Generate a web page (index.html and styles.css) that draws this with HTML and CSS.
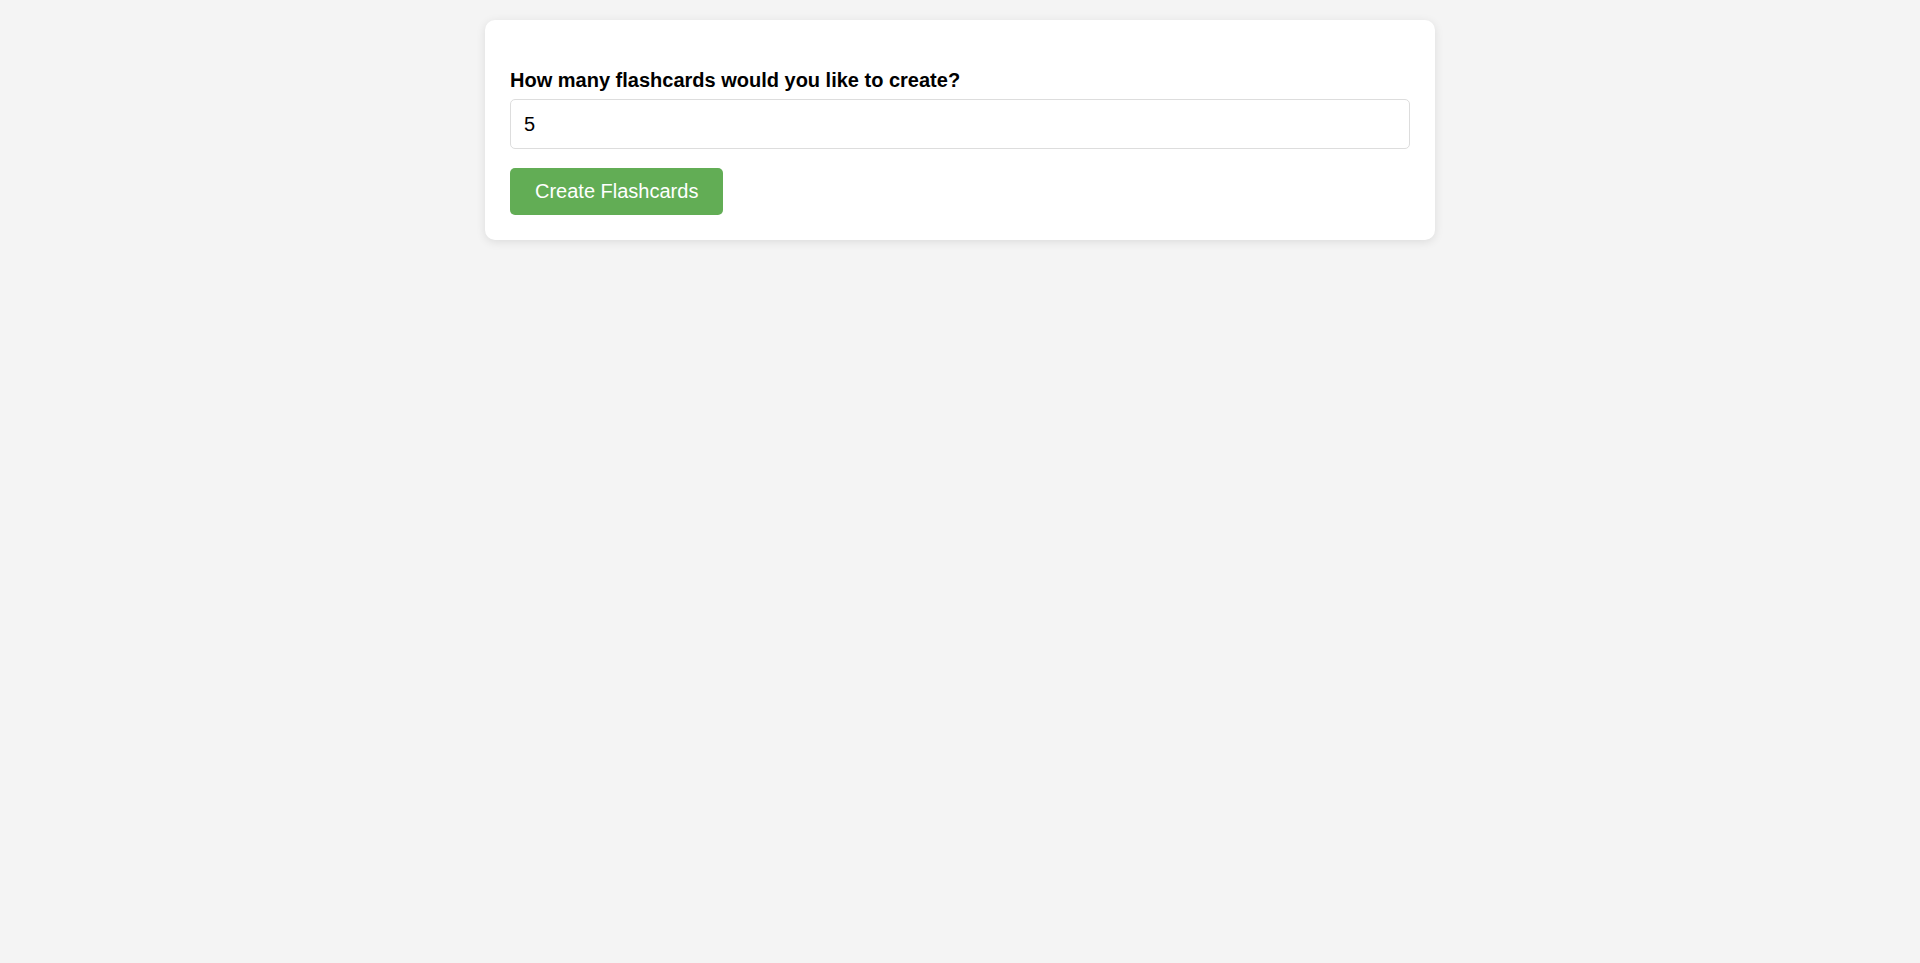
FILE: index.html
```html
<!DOCTYPE html>
<html lang="en">
<head>
<meta charset="UTF-8">
<title>Flashcards</title>
<link rel="stylesheet" href="styles.css">
</head>
<body>
<div class="container">
  <div class="setup">
    <label class="setup-label" for="count">How many flashcards would you like to create?</label>
    <input class="setup-input" id="count" type="number" value="5">
    <button class="btn-create" type="button">Create Flashcards</button>
  </div>
</div>
</body>
</html>
```
FILE: styles.css
```css
html, body {
  margin: 0;
  padding: 0;
}
body {
  background: #f4f4f4;
  font-family: "Liberation Sans", Arial, sans-serif;
  color: #000;
  padding: 20px 0;
}
.container {
  width: 900px;
  margin: 0 auto;
  background: #fff;
  padding: 25px;
  border-radius: 10px;
  box-shadow: 0 2px 10px rgba(0, 0, 0, 0.1);
}
.setup {
  display: flex;
  flex-direction: column;
  align-items: flex-start;
  padding-top: 24px;
}
.setup-label {
  font-size: 20px;
  line-height: 23px;
  font-weight: bold;
  margin-bottom: 7px;
}
.setup-input {
  box-sizing: border-box;
  width: 100%;
  height: 50px;
  padding: 12px 13px;
  font-family: inherit;
  font-size: 20px;
  border: 1px solid #ddd;
  border-radius: 5px;
  margin-bottom: 19px;
  color: #000;
  outline: none;
  -moz-appearance: textfield;
}
.setup-input::-webkit-outer-spin-button,
.setup-input::-webkit-inner-spin-button {
  -webkit-appearance: none;
  margin: 0;
}
.btn-create {
  box-sizing: border-box;
  height: 47px;
  padding: 0 25px;
  font-family: inherit;
  font-size: 20px;
  color: #fff;
  background: #62ad55;
  border: none;
  border-radius: 5px;
  cursor: pointer;
}
```
